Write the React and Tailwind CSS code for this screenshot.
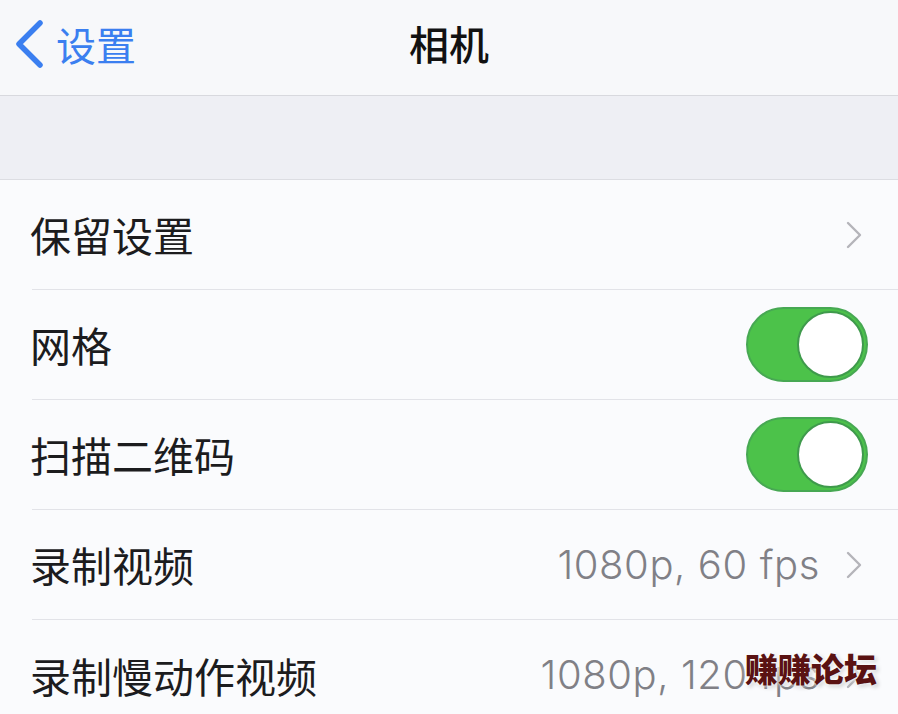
import React from "react";

const Chevron = () => (
  <svg width="16" height="28" viewBox="0 0 16 28" className="shrink-0">
    <path d="M2 2 L14 14 L2 26" fill="none" stroke="#b4b4ba" strokeWidth="2.4" strokeLinecap="round" strokeLinejoin="round" />
  </svg>
);

const Toggle = () => (
  <div className="w-[122px] h-[75px] rounded-full bg-[#4cc24a] border-[2px] border-[#47a853] flex items-center justify-end pr-[2px]">
    <div className="w-[67px] h-[67px] rounded-full bg-white border-[2px] border-[#3f9a4c]" />
  </div>
);

const Row = ({ label, right, last }) => (
  <div className="h-[110px] flex flex-col">
    <div className="flex-1 flex items-center justify-between pl-[30px] pr-[30px]">
      <span className="text-[41px] text-[#1c1c1e] leading-none">{label}</span>
      {right}
    </div>
    {!last && <div className="ml-[32px] h-px bg-[#e2e3e8]" />}
  </div>
);

const Value = ({ children }) => (
  <span
    className="text-[40px] text-[#808086] leading-none tracking-[0.6px]"
    style={{ fontFamily: 'Inter, "Noto Sans", sans-serif', fontWeight: 300 }}
  >
    {children}
  </span>
);

export default function App() {
  return (
    <div
      className="w-[898px] h-[714px] overflow-hidden bg-[#fafbfd] relative"
      style={{ fontFamily: '"Noto Sans CJK SC", "Noto Sans", sans-serif' }}
    >
      <div className="h-[96px] bg-[#f7f8fa] border-b border-[#d8d9de] flex items-center pb-[8px] relative">
        <div className="flex items-center pl-[14px] gap-[12px]">
          <svg width="30" height="48" viewBox="0 0 30 48">
            <path d="M26 3 L5 24 L26 45" fill="none" stroke="#3b7ff0" strokeWidth="5.5" strokeLinecap="round" strokeLinejoin="round" />
          </svg>
          <span className="text-[40px] text-[#3b7ff0] leading-none">设置</span>
        </div>
        <div className="absolute left-0 right-0 top-0 h-[86px] flex items-center justify-center pointer-events-none">
          <span className="text-[40px] font-medium text-[#111] leading-none">相机</span>
        </div>
      </div>
      <div className="h-[84px] bg-[#eeeff4] border-b border-[#dcdde2]" />
      <Row label="保留设置" right={<div className="pr-[6px]"><Chevron /></div>} />
      <Row label="网格" right={<Toggle />} />
      <Row label="扫描二维码" right={<Toggle />} />
      <Row
        label="录制视频"
        right={
          <div className="flex items-center gap-[26px] pr-[6px]">
            <Value>1080p, 60 fps</Value>
            <Chevron />
          </div>
        }
      />
      <Row
        label="录制慢动作视频"
        last
        right={
          <div className="flex items-center gap-[26px] pr-[6px]">
            <Value>1080p, 120 fps</Value>
            <Chevron />
          </div>
        }
      />
      <div
        className="absolute left-[745px] top-[652px] text-[33px] font-black text-[#5a1212] leading-none"
        style={{ textShadow: "0 0 3px #fff, 0 0 6px #fff, 2px 2px 4px rgba(0,0,0,0.25)" }}
      >
        赚赚论坛
      </div>
    </div>
  );
}
